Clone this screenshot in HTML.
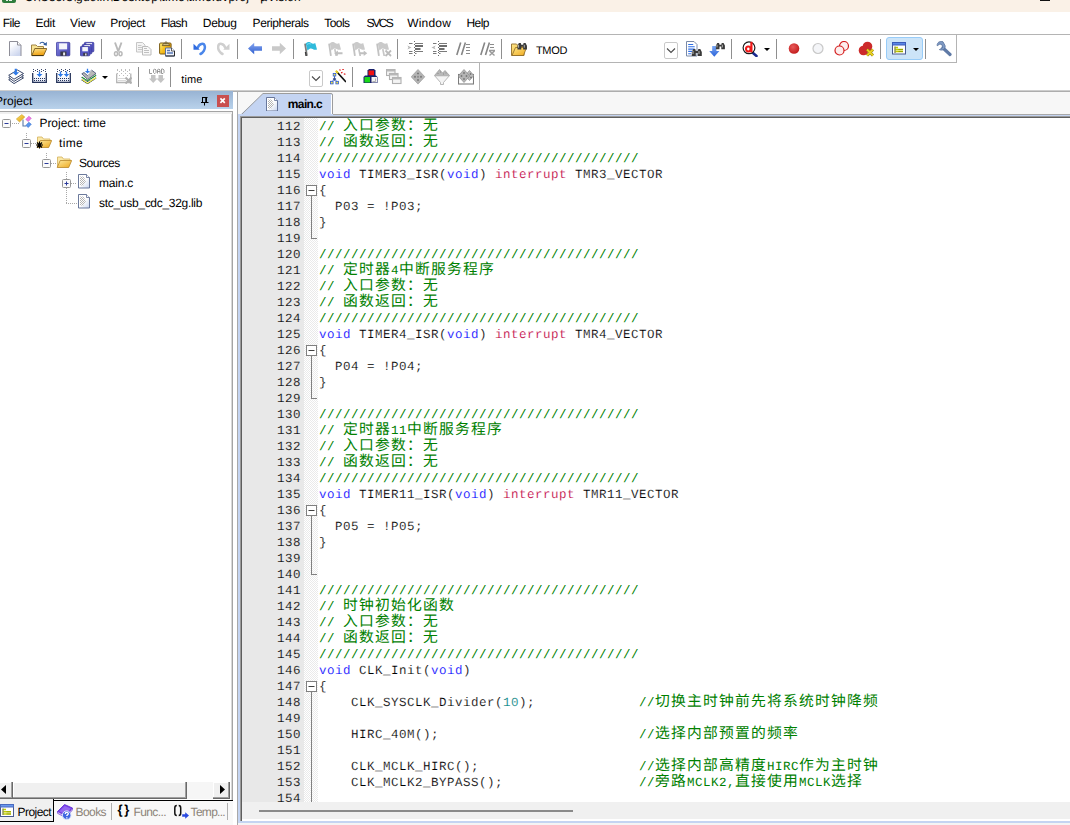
<!DOCTYPE html>
<html><head><meta charset="utf-8"><title>uVision</title>
<style>
html,body{margin:0;padding:0}
body{width:1070px;height:825px;position:relative;overflow:hidden;background:#fff;font-family:"Liberation Sans",sans-serif;font-size:12px;color:#000;text-rendering:geometricPrecision}
.a{position:absolute}
.t{position:absolute;white-space:pre;line-height:14px;height:14px}
.sep{position:absolute;width:1px;background:#8f8f8f}
.hl{position:absolute;height:1px}
.vl{position:absolute;width:1px}
.ln{position:absolute;left:242px;width:828px;height:16px;font-family:"Liberation Mono",monospace;font-size:12.5px;letter-spacing:.5px;line-height:16px;white-space:pre}
.ln i{position:absolute;left:35px;top:1px;font-style:normal;color:#000;-webkit-text-stroke:.15px #e8e8e8}
.ln b{position:absolute;left:77px;top:1px;font-weight:normal;-webkit-text-stroke:.15px #fff}
.c{color:#008000;fill:#008000;-webkit-text-stroke:0}
.k{color:#0000ff}
.m{color:#c0003f}
.n{color:#008080}
span.j{font-family:"Liberation Mono","Noto Sans CJK SC",monospace;font-size:14.8px;letter-spacing:1.2px;line-height:16px;color:#008000}
.g{color:#8c8478}
</style></head><body>
<div class="a" style="left:0;top:0;width:1070px;height:12px;background:#faf1e7"></div>
<div class="a" style="left:2px;top:-8px;width:14px;height:11px;border-radius:2px;background:#2e7d3c"></div>
<div class="a" style="left:6px;top:0;width:2px;height:1px;background:#e8f0e8"></div><div class="a" style="left:9px;top:0;width:3px;height:1px;background:#e8f0e8"></div>
<div class="t" id="title" style="left:24.500px;top:-10px;letter-spacing:.18px">C:\Users\guolin\Desktop\time\time.uvproj - µVision</div>
<div class="a" style="left:1040px;top:0;width:10px;height:1px;background:#111"></div>
<div class="t" style="letter-spacing:-0.56px;left:2.8px;top:16px">File</div>
<div class="t" style="letter-spacing:-0.32px;left:35.5px;top:16px">Edit</div>
<div class="t" style="letter-spacing:-0.12px;left:70px;top:16px">View</div>
<div class="t" style="letter-spacing:-0.39px;left:110.3px;top:16px">Project</div>
<div class="t" style="letter-spacing:-0.61px;left:160.7px;top:16px">Flash</div>
<div class="t" style="letter-spacing:-0.33px;left:202.8px;top:16px">Debug</div>
<div class="t" style="letter-spacing:-0.44px;left:252.6px;top:16px">Peripherals</div>
<div class="t" style="letter-spacing:-0.58px;left:324.3px;top:16px">Tools</div>
<div class="t" style="letter-spacing:-1.80px;left:366.4px;top:16px">SVCS</div>
<div class="t" style="letter-spacing:0.19px;left:407.2px;top:16px">Window</div>
<div class="t" style="letter-spacing:-0.55px;left:466.5px;top:16px">Help</div>
<div class="hl" style="left:0;top:34px;width:1070px;background:#b4b4b4"></div>
<div class="hl" style="left:0;top:62px;width:957px;background:#b4b4b4"></div>
<div class="vl" style="left:956px;top:34px;height:29px;background:#b4b4b4"></div>
<div class="vl" style="left:479px;top:63px;height:27px;background:#b4b4b4"></div>
<div class="hl" style="left:0;top:90px;width:1070px;background:#cdcdcd"></div>
<div class="hl" style="left:0;top:91px;width:1070px;background:#adadad"></div>
<svg class="a" style="left:8px;top:41px" width="16" height="16" viewBox="0 0 16 16"><defs><linearGradient id="gn" x1="0" y1="0" x2=".6" y2="1"><stop offset=".3" stop-color="#fbfcff"/><stop offset="1" stop-color="#cdd6ee"/></linearGradient></defs>
<path d="M1.500 15v-14.500h8l3.500 3.500v11z" fill="url(#gn)"/><path d="M1.500 15v-14.500h8l3.500 3.500v11" fill="none" stroke="#8e8e98"/><path d="M9.500 .5v3.500h3.500" fill="#fff" stroke="#8e8e98"/></svg>
<svg class="a" style="left:31px;top:41px" width="16" height="16" viewBox="0 0 16 16"><defs><linearGradient id="go" x1="0" y1="0" x2=".3" y2="1"><stop offset="0" stop-color="#fde48b"/><stop offset="1" stop-color="#eea012"/></linearGradient></defs>
<path d="M.5 14.500v-10.500h4.500l1.500 1.500h6v2.500" fill="#f9e494" stroke="#a08444"/>
<path d="M.8 14.500l3-7h12l-3.200 7z" fill="url(#go)" stroke="#7a5c20" stroke-width=".9"/><path d="M1 14.600h11.500" stroke="#3a2c08" stroke-width=".9"/>
<path d="M8.800 2.600c1.300-1.800 3.800-1.800 5 .4" fill="none" stroke="#2f5c9e" stroke-width="1.100"/><path d="M12.200 3.800l3.600 1 .1-3.800z" fill="#2f5c9e"/></svg>
<svg class="a" style="left:56px;top:41px" width="16" height="16" viewBox="0 0 16 16"><defs><linearGradient id="gs" x1="0" y1="0" x2="1" y2="1"><stop offset="0" stop-color="#8686e0"/><stop offset="1" stop-color="#4040b0"/></linearGradient></defs><rect x="0.4" y="1.4" width="13.4" height="13.4" rx=".8" fill="url(#gs)" stroke="#3a3a9a" stroke-width=".8"/>
<rect x="3.08" y="2.338" width="8.04" height="6.03" fill="#f4f6fb"/><rect x="4.42" y="10.512" width="6.03" height="4.288" fill="#3a3a46"/><rect x="7.1000000000000005" y="11.450000000000001" width="2.01" height="2.948" fill="#e8e8f0"/></svg>
<svg class="a" style="left:80px;top:41px" width="16" height="16" viewBox="0 0 16 16"><rect x="4.4" y="1.4" width="9.4" height="9.4" rx=".8" fill="#5656c6" stroke="#3a3a9a" stroke-width=".8"/>
<rect x="6.28" y="2.058" width="5.64" height="4.23" fill="#f4f6fb"/><rect x="7.220000000000001" y="7.792" width="4.23" height="3.008" fill="#3a3a46"/><rect x="9.100000000000001" y="8.450000000000001" width="1.41" height="2.068" fill="#e8e8f0"/><rect x="2.4" y="3.4" width="9.4" height="9.4" rx=".8" fill="#5656c6" stroke="#3a3a9a" stroke-width=".8"/>
<rect x="4.28" y="4.058" width="5.64" height="4.23" fill="#f4f6fb"/><rect x="5.22" y="9.792" width="4.23" height="3.008" fill="#3a3a46"/><rect x="7.1" y="10.450000000000001" width="1.41" height="2.068" fill="#e8e8f0"/><rect x="0.4" y="5.4" width="9.4" height="9.4" rx=".8" fill="#5656c6" stroke="#3a3a9a" stroke-width=".8"/>
<rect x="2.2800000000000002" y="6.058000000000001" width="5.64" height="4.23" fill="#f4f6fb"/><rect x="3.2199999999999998" y="11.792000000000002" width="4.23" height="3.008" fill="#3a3a46"/><rect x="5.1000000000000005" y="12.450000000000001" width="1.41" height="2.068" fill="#e8e8f0"/></svg>
<svg class="a" style="left:113px;top:41.5px" width="16" height="16" viewBox="0 0 16 16"><path d="M2 .5l3.300 9M8.500 .5l-3.300 9" stroke="#b9b9b9" stroke-width="1.900" fill="none"/><ellipse cx="3" cy="11.700" rx="1.500" ry="2" fill="none" stroke="#b9b9b9" stroke-width="1.500"/><ellipse cx="7.500" cy="11.700" rx="1.500" ry="2" fill="none" stroke="#b9b9b9" stroke-width="1.500"/></svg>
<svg class="a" style="left:136px;top:41.5px" width="16" height="16" viewBox="0 0 16 16"><path d="M.5 .500h6l2.500 2.500v7h-8.500z" fill="#f4f4f4" stroke="#c6c6c6"/><path d="M2 3.500h3.500M2 5.500h5M2 7.500h5" stroke="#c8c8c8"/><path d="M6.500 4.500h5.500l3 3v5.500h-8.500z" fill="#f8f8f8" stroke="#bcbcbc"/><path d="M8 8.500h5M8 10.500h5M8 6.500h3" stroke="#c0c0c0"/></svg>
<svg class="a" style="left:159px;top:41px" width="16" height="16" viewBox="0 0 16 16"><defs><linearGradient id="gp" x1="0" y1="0" x2="1" y2=".6"><stop offset="0" stop-color="#fff486"/><stop offset=".5" stop-color="#f6c020"/><stop offset="1" stop-color="#de960c"/></linearGradient></defs>
<rect x=".6" y="2" width="11.500" height="11" rx="1" fill="url(#gp)" stroke="#7a5a14"/><path d="M3.300 4.600l1-2h1.300c0-2.200 2.800-2.200 2.800 0h1.300l1 2z" fill="#d8c488" stroke="#5a4a20" stroke-width=".8"/><circle cx="7" cy="2.500" r=".7" fill="#3a2c08"/>
<path d="M6.500 7h6l3 3v5h-9z" fill="#eef2fa" stroke="#5a72a0"/><path d="M12.500 7v3h3" fill="#fff" stroke="#3a3a3a" stroke-width=".8"/><path d="M8 9.500h3M8 12h6" stroke="#5a7ab8" stroke-width="1.300"/><path d="M6.500 15h9v-5" fill="none" stroke="#2a2a2a" stroke-width="1"/></svg>
<svg class="a" style="left:192.5px;top:42px" width="16" height="16" viewBox="0 0 16 16"><g><path d="M4.800 5.800C6 1.200 11 .6 11.800 4.200C12.400 7.500 10 10.800 7.500 12" fill="none" stroke="#4a86ea" stroke-width="2.500" stroke-linecap="round"/><path d="M.5 1.800v6h6.300z" fill="#2f6be0"/></g></svg>
<svg class="a" style="left:216.5px;top:42px" width="16" height="16" viewBox="0 0 16 16"><g transform="translate(13,0) scale(-1,1)"><path d="M4.800 5.800C6 1.200 11 .6 11.800 4.200C12.400 7.500 10 10.800 7.500 12" fill="none" stroke="#cfcfcf" stroke-width="2.500" stroke-linecap="round"/><path d="M.5 1.800v6h6.300z" fill="#cfcfcf"/></g></svg>
<svg class="a" style="left:248px;top:42px" width="16" height="16" viewBox="0 0 16 16"><defs><linearGradient id="gb" x1="0" y1="0" x2="0" y2="1"><stop offset="0" stop-color="#86a6f0"/><stop offset="1" stop-color="#3060d0"/></linearGradient></defs><path d="M0 6.500l6.200-5.700v3.400h7.800v4.600h-7.800v3.400z" fill="url(#gb)"/></svg>
<svg class="a" style="left:272px;top:42px" width="16" height="16" viewBox="0 0 16 16"><path d="M14 6.500l-6.200-5.700v3.400h-7.800v4.600h7.800v3.400z" fill="#c9c9c9"/></svg>
<svg class="a" style="left:304px;top:41.5px" width="16" height="16" viewBox="0 0 16 16"><path d="M.2 1.800l1.800-.3 1.800 12.300-1.800.3z" fill="#7c7c7c"/><path d="M1.800 1.500c1.500-1.800 3.500-2 5-.8s3 1.300 4.400.3l1.800 6.500c-1.600.5-3 .3-4.300-.6s-3.200-.8-5.300 1.600z" fill="#2fbadb"/><path d="M1.500 10l.6 4" stroke="#3a3a3a" stroke-width="1.400"/><path d="M3 2.500c1.500-1.200 2.800-1.200 4-.3" stroke="#7fdcf0" stroke-width=".9" fill="none"/></svg>
<svg class="a" style="left:327.5px;top:41.5px" width="16" height="16" viewBox="0 0 16 16"><path d="M.2 1.800l1.800-.3 1.800 12.300-1.800.3z" fill="#c2c2c2"/><path d="M1.800 1.500c1.500-1.800 3.500-2 5-.8s3 1.300 4.400.3l1.800 6.500c-1.600.5-3 .3-4.300-.6s-3.200-.8-5.300 1.600z" fill="#cacaca"/><path d="M7.500 6.500l1.600 7.500h-1.700l-1.400-6.500z" fill="#c6c6c6"/><path d="M6.300 11.300l3.600-2.800v1.800h4.600v2h-4.600v1.800z" fill="#c0c0c0"/></svg>
<svg class="a" style="left:351.5px;top:41.5px" width="16" height="16" viewBox="0 0 16 16"><path d="M.2 1.800l1.800-.3 1.800 12.300-1.800.3z" fill="#c2c2c2"/><path d="M1.800 1.500c1.500-1.800 3.500-2 5-.8s3 1.300 4.400.3l1.800 6.500c-1.600.5-3 .3-4.300-.6s-3.200-.8-5.300 1.600z" fill="#cacaca"/><path d="M7.500 6.500l1.600 7.500h-1.700l-1.400-6.500z" fill="#c6c6c6"/><path d="M15.300 11.300l-3.600-2.800v1.800h-3.700v2h3.700v1.800z" fill="#c0c0c0"/></svg>
<svg class="a" style="left:375.5px;top:41.5px" width="16" height="16" viewBox="0 0 16 16"><path d="M.2 1.800l1.800-.3 1.800 12.300-1.800.3z" fill="#c2c2c2"/><path d="M1.800 1.500c1.500-1.800 3.500-2 5-.8s3 1.300 4.400.3l1.800 6.500c-1.600.5-3 .3-4.300-.6s-3.200-.8-5.300 1.600z" fill="#cacaca"/><path d="M7.500 6.500l1.600 7.500h-1.700l-1.400-6.500z" fill="#c6c6c6"/><path d="M9.500 8.500l5.500 5.500M15 8.500l-5.500 5.500" stroke="#bcbcbc" stroke-width="1.800"/></svg>
<svg class="a" style="left:407px;top:41px" width="16" height="16" viewBox="0 0 16 16"><path d="M.3 4.500l4.200 2-4.200 2l1.200-2z" fill="#b4b4b4"/><rect x="2" y="2" width="3.500" height="1" fill="#7a7a7a"/><rect x="2" y="10" width="3.500" height="1" fill="#7a7a7a"/><rect x="2" y="12" width="3.500" height="1" fill="#7a7a7a"/><rect x="8" y="2" width="8" height="1" fill="#7a7a7a"/><rect x="8" y="10" width="8" height="1" fill="#7a7a7a"/><rect x="8" y="12" width="1.500" height="1" fill="#7a7a7a"/><rect x="8" y="4" width="8" height="2" fill="#6e6e6e"/><rect x="8" y="7" width="5.500" height="2" fill="#6e6e6e"/><rect x="7" y="0" width="1" height="1" fill="#6a6a6a"/><rect x="7" y="3" width="1" height="1" fill="#6a6a6a"/><rect x="7" y="6" width="1" height="1" fill="#6a6a6a"/><rect x="7" y="9" width="1" height="1" fill="#6a6a6a"/><rect x="7" y="11" width="1" height="1" fill="#6a6a6a"/><rect x="7" y="14" width="1" height="1" fill="#6a6a6a"/></svg>
<svg class="a" style="left:431px;top:41px" width="16" height="16" viewBox="0 0 16 16"><path d="M4.700 4.500l-4.200 2 4.200 2l-1.200-2z" fill="#b4b4b4"/><rect x="2" y="2" width="3.500" height="1" fill="#7a7a7a"/><rect x="2" y="10" width="3.500" height="1" fill="#7a7a7a"/><rect x="2" y="12" width="3.500" height="1" fill="#7a7a7a"/><rect x="8" y="2" width="8" height="1" fill="#7a7a7a"/><rect x="8" y="10" width="8" height="1" fill="#7a7a7a"/><rect x="8" y="12" width="1.500" height="1" fill="#7a7a7a"/><rect x="8" y="4" width="8" height="2" fill="#6e6e6e"/><rect x="8" y="7" width="5.500" height="2" fill="#6e6e6e"/><rect x="7" y="0" width="1" height="1" fill="#6a6a6a"/><rect x="7" y="3" width="1" height="1" fill="#6a6a6a"/><rect x="7" y="6" width="1" height="1" fill="#6a6a6a"/><rect x="7" y="9" width="1" height="1" fill="#6a6a6a"/><rect x="7" y="11" width="1" height="1" fill="#6a6a6a"/><rect x="7" y="14" width="1" height="1" fill="#6a6a6a"/></svg>
<svg class="a" style="left:455px;top:41px" width="16" height="16" viewBox="0 0 16 16"><path d="M5.700 1.500l-3.900 12.500M10.400 1.500l-3.900 12.500" stroke="#868686" stroke-width="1.600"/><rect x="11" y="3" width="4" height="1" fill="#8c8c8c"/><rect x="11" y="6" width="4" height="1" fill="#8c8c8c"/><rect x="11" y="9" width="4" height="1" fill="#8c8c8c"/><rect x="11" y="12" width="4" height="1" fill="#8c8c8c"/></svg>
<svg class="a" style="left:479px;top:41px" width="16" height="16" viewBox="0 0 16 16"><path d="M5.700 1.500l-3.900 12.500M10.400 1.500l-3.900 12.500" stroke="#868686" stroke-width="1.600"/><rect x="11" y="3" width="4" height="1" fill="#8c8c8c"/><rect x="11" y="6" width="4" height="1" fill="#8c8c8c"/><path d="M10 9.500h6M10.500 10l5 4.500M15.500 10l-5 4.500" stroke="#9a9a9a" stroke-width="1.400"/></svg>
<svg class="a" style="left:511px;top:41.5px" width="16" height="16" viewBox="0 0 16 16"><defs><linearGradient id="gf" x1="0" y1="0" x2="1" y2="1"><stop offset="0" stop-color="#fde88b"/><stop offset="1" stop-color="#f0a81c"/></linearGradient></defs>
<path d="M.5 13.500v-11.500h5l1.500 1.500h6v10z" fill="url(#gf)" stroke="#9c7a3a"/><path d="M1 13.500l3.500-8h11l-3 8z" fill="url(#gf)" stroke="#8a6a28" stroke-width=".8"/><g transform="translate(5.5,0) scale(0.95)"><path d="M1 8v-4l1.500-3h2l.5 2h2l.5-2h2l1.500 3v4h-4v-3h-2v3z" fill="#3a3a3a"/><path d="M2.200 3v3M8.200 3v3" stroke="#c8c8c8" stroke-width=".9"/></g></svg>
<svg class="a" style="left:686px;top:41px" width="16" height="16" viewBox="0 0 16 16"><path d="M.5 .500h7.500l3 3v11.500h-10.500z" fill="#fff" stroke="#7a8aa8"/><path d="M2.200 3.500h5M2.200 5.800h6.500M2.200 8.100h6.500M2.200 10.400h4M2.200 12.700h3" stroke="#2f6fe6" stroke-width="1.100"/><g transform="translate(4.8,7) scale(1)"><path d="M1 8v-4l1.500-3h2l.5 2h2l.5-2h2l1.500 3v4h-4v-3h-2v3z" fill="#3a3a3a"/><path d="M2.200 3v3M8.200 3v3" stroke="#c8c8c8" stroke-width=".9"/></g></svg>
<svg class="a" style="left:709px;top:41.5px" width="16" height="16" viewBox="0 0 16 16"><defs><linearGradient id="ga" x1="0" y1="0" x2="0" y2="1"><stop offset="0" stop-color="#7aa8f4"/><stop offset="1" stop-color="#2a62d8"/></linearGradient></defs><path d="M3.200 4h4.200v5h3l-5.100 5.800-5.100-5.800h3z" fill="url(#ga)"/><g transform="translate(6,0) scale(0.9)"><path d="M1 8v-4l1.500-3h2l.5 2h2l.5-2h2l1.500 3v4h-4v-3h-2v3z" fill="#3a3a3a"/><path d="M2.200 3v3M8.200 3v3" stroke="#c8c8c8" stroke-width=".9"/></g></svg>
<svg class="a" style="left:742px;top:40.5px" width="16" height="16" viewBox="0 0 16 16"><path d="M11 12l3.500 3" stroke="#1a2a90" stroke-width="2.600" stroke-linecap="round"/><circle cx="7" cy="6.800" r="5.900" fill="#fff" stroke="#1a1a1a" stroke-width="1.200"/>
<path d="M8.300 .8h2.200v10.500h-2.200z" fill="#f01818"/><ellipse cx="6.300" cy="8" rx="2.300" ry="2.500" fill="none" stroke="#f01818" stroke-width="2.100"/></svg>
<svg class="a" style="left:788px;top:42px" width="16" height="16" viewBox="0 0 16 16"><defs><radialGradient id="gr" cx=".4" cy=".35" r=".7"><stop offset="0" stop-color="#e85a5a"/><stop offset="1" stop-color="#c01818"/></radialGradient></defs><circle cx="6" cy="6.500" r="5.300" fill="url(#gr)"/></svg>
<svg class="a" style="left:812px;top:42px" width="16" height="16" viewBox="0 0 16 16"><circle cx="6" cy="6.500" r="5" fill="#f4f5f8" stroke="#c8c8c8" stroke-width="1.200"/></svg>
<svg class="a" style="left:834px;top:41px" width="16" height="16" viewBox="0 0 16 16"><circle cx="10" cy="5" r="4.500" fill="#fdeeee" stroke="#d42020" stroke-width="1.200"/><circle cx="5.500" cy="9.500" r="4.500" fill="#fdeeee" stroke="#d42020" stroke-width="1.200"/></svg>
<svg class="a" style="left:858px;top:41px" width="16" height="16" viewBox="0 0 16 16"><circle cx="9.500" cy="5.500" r="4.800" fill="#cc2a2a"/><circle cx="5.500" cy="9.500" r="4.800" fill="#cc2a2a"/><path d="M9 8.500l6 6M15 8.500l-6 6" stroke="#8a7a10" stroke-width="3"/><path d="M9 8.500l6 6M15 8.500l-6 6" stroke="#e8d020" stroke-width="1.800"/></svg>
<svg class="a" style="left:936px;top:41px" width="16" height="16" viewBox="0 0 16 16"><path d="M7 7l7 6.500" stroke="#5f7aa6" stroke-width="3.200" stroke-linecap="round"/><path d="M7 .8c-3-1.300-6.300.8-5.800 4l2.800-1.900 2.300 1.300v2.700l-2.900 1.700c3 1.500 6.300-.6 5.700-3.900z" fill="#7f9ac4" stroke="#56709c" stroke-width=".8"/></svg>
<div class="sep" style="left:101px;top:39px;height:20px"></div>
<div class="sep" style="left:181px;top:39px;height:20px"></div>
<div class="sep" style="left:237px;top:39px;height:20px"></div>
<div class="sep" style="left:293px;top:39px;height:20px"></div>
<div class="sep" style="left:397px;top:39px;height:20px"></div>
<div class="sep" style="left:501px;top:39px;height:20px"></div>
<div class="sep" style="left:731px;top:39px;height:20px"></div>
<div class="sep" style="left:776px;top:39px;height:20px"></div>
<div class="sep" style="left:880px;top:39px;height:20px"></div>
<div class="sep" style="left:925px;top:39px;height:20px"></div>
<div class="t" style="letter-spacing:-0.35px;font-size:11px;left:536px;top:43.500px">TMOD</div>
<svg class="a" style="left:664px;top:42px" width="14" height="17" viewBox="0 0 14 17"><rect x=".5" y=".5" width="13" height="16" rx="1.500" fill="#fff" stroke="#c9c9c9"/><path d="M3 6.500l4 4 4-4" fill="none" stroke="#4a4a4a" stroke-width="1.100"/></svg>
<svg class="a" style="left:763.500px;top:48px" width="6" height="3"><path d="M0 0h6l-3 3z" fill="#000"/></svg>
<div class="a" style="left:886px;top:37px;width:35px;height:21px;border:1px solid #98ccf8;border-radius:3px;background:#cce4f8"></div>
<svg class="a" style="left:892px;top:42px" width="16" height="16" viewBox="0 0 16 16"><rect x=".5" y=".500" width="13" height="11.500" fill="#fff" stroke="#4a5a90"/><rect x=".5" y=".5" width="13" height="2.500" fill="#5a88e8" stroke="#3a5ab8"/><path d="M3.500 5.500h2.500M3.500 7.500h7.500M3.500 9.500h7.500" stroke="#c4d000" stroke-width="1.300"/><path d="M3 4.500v6.500" stroke="#5a6400" stroke-width="1"/><path d="M6.500 7.500h4.500M6.500 9.500h4.500" stroke="#7a8400" stroke-width=".6"/></svg>
<svg class="a" style="left:912.500px;top:48px" width="6" height="3"><path d="M0 0h6l-3 3z" fill="#000"/></svg>
<svg class="a" style="left:7.5px;top:68px" width="16" height="16" viewBox="0 0 16 16"><path d="M.7 11.7l8.800-5.300 6 3.500-9.500 5.700z" fill="#fff" stroke="#26345a" stroke-width=".9" stroke-linejoin="round"/><path d="M.7 9.5l8.800-5.300 6 3.500-9.500 5.700z" fill="#fff" stroke="#26345a" stroke-width=".9" stroke-linejoin="round"/><path d="M.7 7.3l8.800-5.300 6 3.500-9.500 5.700z" fill="#fff" stroke="#26345a" stroke-width=".9" stroke-linejoin="round"/><path d="M6.699999999999999 0.8h2.2v3.5h2.3l-3.4 3.2l-3.4 -3.2h2.3z" fill="#2f7ae8"/></svg>
<svg class="a" style="left:32px;top:68px" width="16" height="16" viewBox="0 0 16 16"><defs><linearGradient id="gu1" x1="0" y1="0" x2="0" y2="1"><stop offset=".3" stop-color="#fff"/><stop offset="1" stop-color="#dfe4f4"/></linearGradient></defs><path d="M.7 5v9.300h13.600v-9.300" fill="url(#gu1)" stroke="#26345a" stroke-width="1.300"/><rect x="1" y="1" width="1" height="1" fill="#3a4668"/><rect x="5" y="1" width="1" height="1" fill="#3a4668"/><rect x="9" y="1" width="1" height="1" fill="#3a4668"/><rect x="13" y="1" width="1" height="1" fill="#3a4668"/><rect x="3" y="2" width="1" height="1" fill="#3a4668"/><rect x="7" y="2" width="1" height="1" fill="#3a4668"/><rect x="11" y="2" width="1" height="1" fill="#3a4668"/><rect x="1" y="3" width="1" height="1" fill="#3a4668"/><rect x="5" y="3" width="1" height="1" fill="#3a4668"/><rect x="9" y="3" width="1" height="1" fill="#3a4668"/><rect x="13" y="3" width="1" height="1" fill="#3a4668"/><rect x="2" y="10" width="1" height="1" fill="#26345a"/><rect x="4" y="10" width="1" height="1" fill="#26345a"/><rect x="6" y="10" width="1" height="1" fill="#26345a"/><rect x="8" y="10" width="1" height="1" fill="#26345a"/><rect x="10" y="10" width="1" height="1" fill="#26345a"/><rect x="12" y="10" width="1" height="1" fill="#26345a"/><rect x="2" y="12" width="1" height="1" fill="#26345a"/><rect x="4" y="12" width="1" height="1" fill="#26345a"/><rect x="6" y="12" width="1" height="1" fill="#26345a"/><rect x="8" y="12" width="1" height="1" fill="#26345a"/><rect x="10" y="12" width="1" height="1" fill="#26345a"/><rect x="12" y="12" width="1" height="1" fill="#26345a"/><path d="M6.8 3.5h1.4v2.5h2.3l-3 3l-3 -3h2.3z" fill="#2f7ae8"/></svg>
<svg class="a" style="left:56px;top:68px" width="16" height="16" viewBox="0 0 16 16"><defs><linearGradient id="gu2" x1="0" y1="0" x2="0" y2="1"><stop offset=".3" stop-color="#fff"/><stop offset="1" stop-color="#dfe4f4"/></linearGradient></defs><path d="M.7 5v9.300h13.600v-9.300" fill="url(#gu2)" stroke="#26345a" stroke-width="1.300"/><rect x="1" y="1" width="1" height="1" fill="#3a4668"/><rect x="5" y="1" width="1" height="1" fill="#3a4668"/><rect x="9" y="1" width="1" height="1" fill="#3a4668"/><rect x="13" y="1" width="1" height="1" fill="#3a4668"/><rect x="3" y="2" width="1" height="1" fill="#3a4668"/><rect x="7" y="2" width="1" height="1" fill="#3a4668"/><rect x="11" y="2" width="1" height="1" fill="#3a4668"/><rect x="1" y="3" width="1" height="1" fill="#3a4668"/><rect x="5" y="3" width="1" height="1" fill="#3a4668"/><rect x="9" y="3" width="1" height="1" fill="#3a4668"/><rect x="13" y="3" width="1" height="1" fill="#3a4668"/><rect x="2" y="10" width="1" height="1" fill="#26345a"/><rect x="4" y="10" width="1" height="1" fill="#26345a"/><rect x="6" y="10" width="1" height="1" fill="#26345a"/><rect x="8" y="10" width="1" height="1" fill="#26345a"/><rect x="10" y="10" width="1" height="1" fill="#26345a"/><rect x="12" y="10" width="1" height="1" fill="#26345a"/><rect x="2" y="12" width="1" height="1" fill="#26345a"/><rect x="4" y="12" width="1" height="1" fill="#26345a"/><rect x="6" y="12" width="1" height="1" fill="#26345a"/><rect x="8" y="12" width="1" height="1" fill="#26345a"/><rect x="10" y="12" width="1" height="1" fill="#26345a"/><rect x="12" y="12" width="1" height="1" fill="#26345a"/><path d="M3.8 3.5h1.4v2.5h2.0999999999999996l-2.8 3l-2.8 -3h2.0999999999999996z" fill="#2f7ae8"/><path d="M9.8 3.5h1.4v2.5h2.0999999999999996l-2.8 3l-2.8 -3h2.0999999999999996z" fill="#2f7ae8"/></svg>
<svg class="a" style="left:80.5px;top:68px" width="16" height="16" viewBox="0 0 16 16"><path d="M1 11.2L6.500 15.0L14.800 9.399999999999999" fill="none" stroke="#1e2c5c" stroke-width="2.3" stroke-dasharray="1.500 .5"/><path d="M1 11.2L6.500 15.0L14.800 9.399999999999999" fill="none" stroke="#ecec10" stroke-width="1.3"/><path d="M1 9.9L6.500 13.7L14.800 8.1" fill="none" stroke="#fff" stroke-width="1.9" stroke-dasharray="1.500 .5"/><path d="M1 9.9L6.500 13.7L14.800 8.1" fill="none" stroke="#fff" stroke-width="0.9"/><path d="M1 8.7L6.500 12.5L14.800 6.8999999999999995" fill="none" stroke="#1e2c5c" stroke-width="2.3" stroke-dasharray="1.500 .5"/><path d="M1 8.7L6.500 12.5L14.800 6.8999999999999995" fill="none" stroke="#22a822" stroke-width="1.3"/><path d="M1 7.4L6.500 11.2L14.800 5.6000000000000005" fill="none" stroke="#fff" stroke-width="1.9" stroke-dasharray="1.500 .5"/><path d="M1 7.4L6.500 11.2L14.800 5.6000000000000005" fill="none" stroke="#fff" stroke-width="0.9"/><path d="M.8 5.800l2.200-1.300 4 3.500 3.500-6 4.500 3.500-8.300 6z" fill="#b8b8b8" stroke="#2a3862" stroke-width=".7" stroke-linejoin="round"/><path d="M7 8l3.500-6" stroke="#e8e8e8" stroke-width=".8"/><path d="M5.85 0.8h1.3v2.2h1.9500000000000002l-2.6 2.6l-2.6 -2.6h1.9500000000000002z" fill="#2f7ae8"/></svg>
<svg class="a" style="left:116px;top:68px" width="16" height="16" viewBox="0 0 16 16"><rect x="1" y="1" width="1" height="1" fill="#bdbdbd"/><rect x="5" y="1" width="1" height="1" fill="#bdbdbd"/><rect x="9" y="1" width="1" height="1" fill="#bdbdbd"/><rect x="13" y="1" width="1" height="1" fill="#bdbdbd"/><rect x="3" y="3" width="1" height="1" fill="#bdbdbd"/><rect x="7" y="3" width="1" height="1" fill="#bdbdbd"/><rect x="11" y="3" width="1" height="1" fill="#bdbdbd"/><rect x="1" y="2" width="1" height="1" fill="#bdbdbd"/><rect x="5" y="2" width="1" height="1" fill="#bdbdbd"/><rect x="9" y="2" width="1" height="1" fill="#bdbdbd"/><rect x="13" y="2" width="1" height="1" fill="#bdbdbd"/><rect x="1" y="5" width="1" height="1" fill="#bdbdbd"/><rect x="5" y="5" width="1" height="1" fill="#bdbdbd"/><rect x="9" y="5" width="1" height="1" fill="#bdbdbd"/><rect x="13" y="5" width="1" height="1" fill="#bdbdbd"/><rect x="3" y="7" width="1" height="1" fill="#bdbdbd"/><rect x="7" y="7" width="1" height="1" fill="#bdbdbd"/><rect x="11" y="7" width="1" height="1" fill="#bdbdbd"/><path d="M.7 5.500v9h14.100v-9" fill="none" stroke="#b4b4b4" stroke-width="1.300"/><rect x="2.5" y="10" width="1" height="1" fill="#b4b4b4"/><rect x="4.5" y="10" width="1" height="1" fill="#b4b4b4"/><rect x="6.5" y="10" width="1" height="1" fill="#b4b4b4"/><rect x="8.5" y="10" width="1" height="1" fill="#b4b4b4"/><rect x="2.5" y="12" width="1" height="1" fill="#b4b4b4"/><rect x="4.5" y="12" width="1" height="1" fill="#b4b4b4"/><rect x="6.5" y="12" width="1" height="1" fill="#b4b4b4"/><rect x="8.5" y="12" width="1" height="1" fill="#b4b4b4"/><path d="M9.500 9.500l6 6M15.500 9.500l-6 6" stroke="#b0b0b0" stroke-width="2"/></svg>
<svg class="a" style="left:149px;top:68px" width="16" height="16" viewBox="0 0 16 16"><path d="M.5 1v4.500h2.500M4.500 2v2.500l1 1h.5l1-1v-2.500l-1-1h-.5zM8.500 5.500v-3.500l1-1h.5l1 1v3.500M8.500 3.500h2.500M12.500 1v4.500h1.500l1-1v-2.500l-1-1z" fill="none" stroke="#8e8e8e" stroke-width=".9"/><path d="M2 7h4.500v3.500h3v-3.500h4.500v3.500h2l-4.200 4.500-3.800-4-3.800 4-4.200-4.500h2z" fill="#c4c4c4"/></svg>
<svg class="a" style="left:330px;top:68.5px" width="16" height="16" viewBox="0 0 16 16"><path d="M6.500 2.500l9.500 10.500" stroke="#111" stroke-width="1.700"/><path d="M5.800 1.700l2.200 2.400" stroke="#e8d020" stroke-width="2"/><path d="M9.200 .8l1.600.5M12.300 .5l1.500-.2M11 3.800l1.500-.4M13.800 4.800l1.600.6" stroke="#e02020" stroke-width="1.200"/>
<path d="M4.500 6v3.500M4.500 10l-2.800 3M4.500 10l2.800 3" stroke="#2a5ad8" stroke-width=".9"/><rect x="3.200" y="4.400" width="2.600" height="2.600" fill="#f0e040" stroke="#2a5ad8" stroke-width=".8"/><rect x=".5" y="12.300" width="2.600" height="2.600" fill="#f0e040" stroke="#2a5ad8" stroke-width=".8"/><rect x="5.900" y="12.300" width="2.600" height="2.600" fill="#f0e040" stroke="#2a5ad8" stroke-width=".8"/><path d="M4.500 8.300l1.800 1.800-1.800 1.800-1.800-1.800z" fill="#3a5088"/></svg>
<svg class="a" style="left:363px;top:68.3px" width="16" height="16" viewBox="0 0 16 16"><path d="M4.500 2.500l1.500-1.500h5l1.500 1.500v5.500h-8z" fill="#18206a"/><rect x="5.500" y="2.500" width="5.500" height="5" fill="#f01010"/>
<path d="M.5 9l1.500-1.500h11l1.500 1.500v6h-14z" fill="#18206a"/><rect x="1.500" y="9" width="5.500" height="5.500" fill="#18d818"/><rect x="8.500" y="9" width="5.500" height="5.500" fill="#f2f2f2"/><path d="M12.500 10.500v3h-3" stroke="#b0b0b0" fill="none"/></svg>
<svg class="a" style="left:386px;top:69px" width="16" height="16" viewBox="0 0 16 16"><rect x="0.5" y="0.5" width="8.500" height="6" fill="#f4f4f4" stroke="#b0b0b0" stroke-width="1.100"/><rect x="0.5" y="0.5" width="8.500" height="2" fill="#b8b8b8"/><rect x="3.5" y="4.5" width="8.500" height="6" fill="#f4f4f4" stroke="#b0b0b0" stroke-width="1.100"/><rect x="3.5" y="4.5" width="8.500" height="2" fill="#b8b8b8"/><rect x="6.5" y="8.5" width="8.500" height="6" fill="#f4f4f4" stroke="#b0b0b0" stroke-width="1.100"/><rect x="6.5" y="8.5" width="8.500" height="2" fill="#b8b8b8"/></svg>
<svg class="a" style="left:410.5px;top:69px" width="16" height="16" viewBox="0 0 16 16"><path d="M7 .5l6.800 7.300-6.800 7.300-6.800-7.300z" fill="#b4b4b4" stroke="#9c9c9c" stroke-width=".7"/><path d="M7 3.500v2M6 4.500h2" stroke="#787878" stroke-width="1"/><path d="M4 6.800v2M3 7.800h2" stroke="#787878" stroke-width="1"/><path d="M10 6.800v2M9 7.800h2" stroke="#787878" stroke-width="1"/><path d="M7 10v2M6 11h2" stroke="#787878" stroke-width="1"/><path d="M7 6.800v2M6 7.800h2" stroke="#8a8a8a" stroke-width="1"/></svg>
<svg class="a" style="left:434px;top:69px" width="16" height="16" viewBox="0 0 16 16"><path d="M.5 6.500l5-6 3 3.500 2.500-2.500 4.500 5z" fill="#b8b8b8" stroke="#9a9a9a" stroke-width=".7"/><path d="M.7 6.800h14.600l-5.800 6.700v2h-3v-2z" fill="#f4f4f4" stroke="#b0b0b0" stroke-width=".9"/><path d="M3.500 4.500h1M6 3h1M9 5h1M11.500 4h1" stroke="#8a8a8a"/></svg>
<svg class="a" style="left:458px;top:69px" width="16" height="16" viewBox="0 0 16 16"><rect x=".5" y="5.500" width="15" height="9.500" fill="#fff" stroke="#7c7c7c" stroke-width="1.100"/><path d="M11.500 1.500l4.300 5-4.300 5-4.300-5z" fill="#bcbcbc" stroke="#8c8c8c" stroke-width=".7"/><path d="M6 .5l5.800 6.500-5.800 6.500-5.800-6.500z" fill="#b4b4b4" stroke="#8c8c8c" stroke-width=".7"/><path d="M6 3v2M5 4h2" stroke="#7c7c7c" stroke-width="1"/><path d="M3.500 6v2M2.500 7h2" stroke="#7c7c7c" stroke-width="1"/><path d="M8.500 6v2M7.500 7h2" stroke="#7c7c7c" stroke-width="1"/><path d="M6 9v2M5 10h2" stroke="#7c7c7c" stroke-width="1"/><path d="M12.500 4v2M11.500 5h2" stroke="#7c7c7c" stroke-width="1"/><path d="M13 7.500v2M12 8.500h2" stroke="#7c7c7c" stroke-width="1"/></svg>
<svg class="a" style="left:102px;top:76px" width="6" height="3"><path d="M0 0h6l-3 3z" fill="#000"/></svg>
<div class="sep" style="left:138px;top:67px;height:20px"></div>
<div class="sep" style="left:170px;top:67px;height:20px"></div>
<div class="sep" style="left:352px;top:67px;height:20px"></div>
<div class="t" style="letter-spacing:0.15px;font-size:11px;left:181.200px;top:72.500px">time</div>
<svg class="a" style="left:309px;top:70px" width="14" height="17" viewBox="0 0 14 17"><rect x=".5" y=".5" width="13" height="16" rx="1.500" fill="#fff" stroke="#c9c9c9"/><path d="M3 6.500l4 4 4-4" fill="none" stroke="#4a4a4a" stroke-width="1.100"/></svg>
<div class="a" style="left:0;top:91px;width:233px;height:18px;background:linear-gradient(#98b3d3,#b9d2eb)"></div>
<div class="t" id="ph" style="left:-5px;top:94px">Project</div>
<svg class="a" style="left:201px;top:97px" width="8" height="9" viewBox="0 0 8 9"><path d="M1 .500h5.500M1.500 0v5.500M5 0v5.500M0 5.500h7.500M3.500 6v2.500" stroke="#000" stroke-width="1" fill="none"/><path d="M4.500 0h1.500v5h-1.500z" fill="#000"/></svg>
<div class="a" style="left:217px;top:95px;width:12px;height:12px;background:#c94f4f"></div>
<svg class="a" style="left:219px;top:97px" width="8" height="8" viewBox="0 0 8 8"><path d="M1.400 1.400l4.400 4.400M5.800 1.400l-4.400 4.400" stroke="#fff" stroke-width="1.700"/></svg>
<div class="a" style="left:-1px;top:111px;width:232px;height:688px;border:1px solid #a4a4a4;background:#fff;box-shadow:inset 0 2px 0 #f0f0f0, inset -1px 0 0 #d8d8d8"></div>
<div class="vl" style="left:237px;top:92px;height:733px;background:#a9a9a9"></div>
<svg class="a" style="left:2px;top:119px" width="9" height="9" viewBox="0 0 9 9"><rect x=".5" y=".5" width="8" height="8" rx="1" fill="#fafafa" stroke="#969696"/><path d="M2.500 4.500h4" stroke="#2a3a9a"/></svg>
<div class="a" style="left:12px;top:123px;width:7px;height:1px;background:repeating-linear-gradient(90deg,#a8a8a8 0 1px,transparent 1px 2px)"></div>
<svg class="a" style="left:16px;top:113.5px" width="16" height="16" viewBox="0 0 16 16"><defs><linearGradient id="gpy" x1="0" y1="0" x2="1" y2="1"><stop offset="0" stop-color="#fbe068"/><stop offset="1" stop-color="#e0a010"/></linearGradient></defs><path d="M7 5.500v6.500h3" fill="none" stroke="#5a78a8" stroke-width="1.100"/><path d="M.3 5l5.500-4.500 3 2.500-5.300 5z" fill="url(#gpy)" stroke="#c8981c" stroke-width=".5"/><path d="M12.800 2.200l2.500 2-3 3.300-2.500-2z" fill="#ee7ae8" stroke="#c44cc0" stroke-width=".5"/><path d="M12.800 8.200l2.500 2-3 3.300-2.500-2z" fill="#5a98ee" stroke="#2a62c8" stroke-width=".5"/></svg>
<div class="t" style="letter-spacing:-0.01px;left:39.400px;top:116px">Project: time</div>
<div class="a" style="left:26px;top:133px;width:1px;height:6px;background:repeating-linear-gradient(180deg,#a8a8a8 0 1px,transparent 1px 2px)"></div>
<svg class="a" style="left:22px;top:139px" width="9" height="9" viewBox="0 0 9 9"><rect x=".5" y=".5" width="8" height="8" rx="1" fill="#fafafa" stroke="#969696"/><path d="M2.500 4.500h4" stroke="#2a3a9a"/></svg>
<div class="a" style="left:31px;top:143px;width:5px;height:1px;background:repeating-linear-gradient(90deg,#a8a8a8 0 1px,transparent 1px 2px)"></div>
<svg class="a" style="left:36px;top:135px" width="16" height="16" viewBox="0 0 16 16"><defs><linearGradient id="gfx" x1="0" y1="0" x2="1" y2="1"><stop offset="0" stop-color="#fdeaa0"/><stop offset="1" stop-color="#eea81c"/></linearGradient></defs><path d="M1.500 12v-10h4.500l1.500 2h6.500v3" fill="#fbe9a8" stroke="#d8b868" stroke-width=".9"/><path d="M1.200 12.500l3-7h11.500l-3 7z" fill="url(#gfx)" stroke="#b8862a" stroke-width=".8"/><path d="M0 10h7M3.500 6.500v7M1 7.500l5 5M6 7.500l-5 5" stroke="#000" stroke-width="1.100"/></svg>
<div class="t" style="letter-spacing:0.33px;left:59px;top:136px">time</div>
<div class="a" style="left:46px;top:153px;width:1px;height:6px;background:repeating-linear-gradient(180deg,#a8a8a8 0 1px,transparent 1px 2px)"></div>
<svg class="a" style="left:42px;top:159px" width="9" height="9" viewBox="0 0 9 9"><rect x=".5" y=".5" width="8" height="8" rx="1" fill="#fafafa" stroke="#969696"/><path d="M2.500 4.500h4" stroke="#2a3a9a"/></svg>
<div class="a" style="left:51px;top:163px;width:6px;height:1px;background:repeating-linear-gradient(90deg,#a8a8a8 0 1px,transparent 1px 2px)"></div>
<svg class="a" style="left:56px;top:155px" width="16" height="16" viewBox="0 0 16 16"><defs><linearGradient id="gfo" x1="0" y1="0" x2="1" y2="1"><stop offset="0" stop-color="#fdeaa0"/><stop offset="1" stop-color="#eea81c"/></linearGradient></defs><path d="M1.500 12v-10h4.500l1.500 2h6.500v3" fill="#fbe9a8" stroke="#d8b868" stroke-width=".9"/><path d="M1.200 12.500l3-7h11.500l-3 7z" fill="url(#gfo)" stroke="#b8862a" stroke-width=".8"/></svg>
<div class="t" style="letter-spacing:-0.48px;left:79px;top:156px">Sources</div>
<div class="a" style="left:66px;top:172px;width:1px;height:32px;background:repeating-linear-gradient(180deg,#a8a8a8 0 1px,transparent 1px 2px)"></div>
<svg class="a" style="left:62px;top:179px" width="9" height="9" viewBox="0 0 9 9"><rect x=".5" y=".5" width="8" height="8" rx="1" fill="#fafafa" stroke="#969696"/><path d="M2.500 4.500h4" stroke="#2a3a9a"/><path d="M4.500 2.500v4" stroke="#2a3a9a"/></svg>
<div class="a" style="left:71px;top:183px;width:6px;height:1px;background:repeating-linear-gradient(90deg,#a8a8a8 0 1px,transparent 1px 2px)"></div>
<svg class="a" style="left:78px;top:174px" width="16" height="16" viewBox="0 0 16 16"><defs><linearGradient id="gfi" x1="0" y1="0" x2="1" y2="1"><stop offset=".5" stop-color="#fff"/><stop offset="1" stop-color="#c8d4ee"/></linearGradient><pattern id="pd" width="2" height="2" patternUnits="userSpaceOnUse"><rect width="1" height="1" fill="#b4b4b4"/><rect x="1" y="1" width="1" height="1" fill="#b4b4b4"/></pattern></defs>
<path d="M.5 .500h8l3 3v10.500h-11z" fill="url(#gfi)" stroke="#5a6a90" stroke-width=".9"/><path d="M8.500 .500v3h3" fill="#fff" stroke="#5a6a90" stroke-width=".8"/><path d="M2 2.500h3.500l2.500 4.500-2.500 4.500h-3.500z" fill="url(#pd)"/></svg>
<div class="t" style="letter-spacing:-0.22px;left:99px;top:176px">main.c</div>
<div class="a" style="left:66px;top:203px;width:11px;height:1px;background:repeating-linear-gradient(90deg,#a8a8a8 0 1px,transparent 1px 2px)"></div>
<svg class="a" style="left:78px;top:194px" width="16" height="16" viewBox="0 0 16 16"><defs><linearGradient id="gfi" x1="0" y1="0" x2="1" y2="1"><stop offset=".5" stop-color="#fff"/><stop offset="1" stop-color="#c8d4ee"/></linearGradient><pattern id="pd" width="2" height="2" patternUnits="userSpaceOnUse"><rect width="1" height="1" fill="#b4b4b4"/><rect x="1" y="1" width="1" height="1" fill="#b4b4b4"/></pattern></defs>
<path d="M.5 .500h8l3 3v10.500h-11z" fill="url(#gfi)" stroke="#5a6a90" stroke-width=".9"/><path d="M8.500 .500v3h3" fill="#fff" stroke="#5a6a90" stroke-width=".8"/><path d="M2 2.500h3.500l2.500 4.500-2.500 4.500h-3.500z" fill="url(#pd)"/></svg>
<div class="t" style="letter-spacing:-0.30px;left:99px;top:196px">stc_usb_cdc_32g.lib</div>
<div class="a" style="left:0;top:782px;width:230px;height:17px;background:#f6f6f6"></div>
<div class="a" style="left:-2px;top:782px;width:14px;height:16px;background:#f0f0f0;border-right:1px solid #6a6a6a;border-bottom:1px solid #6a6a6a;box-shadow:inset -1px -1px 0 #a0a0a0, inset 1px 1px 0 #fff"></div>
<svg class="a" style="left:1px;top:785px" width="5" height="9"><path d="M5 0v9l-5-4.500z" fill="#000"/></svg>
<div class="a" style="left:13px;top:782px;width:173px;height:16px;background:#f0f0f0;border-right:1px solid #6a6a6a;border-bottom:1px solid #6a6a6a;box-shadow:inset -1px -1px 0 #a0a0a0, inset 1px 1px 0 #fff"></div>
<div class="a" style="left:213px;top:782px;width:16px;height:16px;background:#f0f0f0;border-right:1px solid #6a6a6a;border-bottom:1px solid #6a6a6a;box-shadow:inset -1px -1px 0 #a0a0a0, inset 1px 1px 0 #fff"></div>
<svg class="a" style="left:220px;top:785px" width="5" height="9"><path d="M0 0v9l5-4.500z" fill="#000"/></svg>
<div class="a" style="left:0;top:801px;width:233px;height:24px;background:#f8f8f8"></div>
<div class="hl" style="left:0;top:800px;width:233px;background:#000"></div>
<div class="a" style="left:0;top:799px;width:53px;height:22px;background:#f0f0f0;border-right:1px solid #000;border-bottom:1.500px solid #000"></div>
<svg class="a" style="left:-0.5px;top:804px" width="14" height="13" viewBox="0 0 14 13"><rect x=".5" y=".500" width="13" height="12" fill="#fff" stroke="#4a5a90"/><rect x=".5" y=".5" width="13" height="2.500" fill="#6a98ee" stroke="#4a6ac0"/><path d="M3.500 5.500h2.500M3.500 7.800h7.500M3.500 10h7.500" stroke="#c4d000" stroke-width="1.400"/><path d="M3 4.500v6.500" stroke="#5a6400" stroke-width="1"/><path d="M6.500 7.800h4.500M6.500 10h4.500" stroke="#7a8400" stroke-width=".6"/></svg>
<div class="t" style="letter-spacing:-0.55px;left:17.500px;top:805px">Project</div>
<svg class="a" style="left:57px;top:803.5px" width="16" height="16" viewBox="0 0 16 16"><path d="M.5 7.500l7-7 8 3.500-6.500 8z" fill="#7a3eea" stroke="#5a2ad0" stroke-width=".8"/><path d="M2.500 7.300l5.300-5.300 6 2.600-5 6z" fill="#9468f0"/><path d="M.5 7.500v1.800l8.500 4.500 6.500-8v-1.800l-6.500 8z" fill="#d8c8f8" stroke="#6a3ad0" stroke-width=".7"/><circle cx="9.700" cy="11.200" r="4.300" fill="#3f66e0" stroke="#dfe6ff" stroke-width="1"/><path d="M8.200 10c0-2.100 3.200-2.100 3.100-.2c0 1.100-1.500 1-1.500 2.300M9.800 13.300v1.100" stroke="#fff" stroke-width="1.300" fill="none"/></svg>
<div class="t g" style="letter-spacing:-0.59px;left:75.600px;top:805px">Books</div>
<div class="vl" style="left:111px;top:803px;height:17px;background:#b0b0b0"></div>
<div class="t" style="left:117.500px;top:803px;font-weight:bold;font-size:13px;letter-spacing:1.800px">{}</div>
<div class="t g" style="letter-spacing:-0.58px;left:133.400px;top:805px">Func...</div>
<svg class="a" style="left:173px;top:803px" width="16" height="16" viewBox="0 0 16 16"><path d="M3.800 2.500c-2 0-2 1-2 2.500v5c0 1.500 0 2.500 2 2.500M5.700 2.500c2 0 2 1 2 2.500v5c0 1.500 0 2.500-2 2.500" fill="none" stroke="#111" stroke-width="1.500"/><path d="M9.200 11.200h3v-2l3.800 3.300-3.800 3.300v-2h-3z" fill="#2a4ae0"/></svg>
<div class="t g" style="letter-spacing:-0.71px;left:190.600px;top:805px">Temp...</div>
<div class="vl" style="left:227px;top:803px;height:17px;background:#b0b0b0"></div>
<div class="a" style="left:238px;top:92px;width:832px;height:22px;background:#f7f7f7"></div>
<svg class="a" style="left:238px;top:92px" width="100" height="25" viewBox="0 0 100 25"><path d="M3 22L25 1.500h68.500q1.500 0 1.500 1.500v19z" fill="#c4d4f2"/><path d="M93.500 2.500v20" stroke="#fff" stroke-width="1"/><path d="M0 22.500h3.500L25 1.500h68q1.500 0 1.500 1.500v19.500" fill="none" stroke="#9c9c9c"/></svg>
<div class="a" style="left:238px;top:114px;width:832px;height:3px;background:#c4d4f2"></div>
<div class="hl" style="left:333px;top:114px;width:737px;background:#a9a9a9"></div>
<div class="a" style="left:238px;top:117px;width:3px;height:706px;background:#c4d4f2"></div>
<div class="a" style="left:238px;top:820px;width:832px;height:3px;background:#c4d4f2"></div>
<div class="a" style="left:238px;top:823px;width:832px;height:2px;background:#f4f4f4"></div>
<svg class="a" style="left:266px;top:97px" width="12" height="14" viewBox="0 0 12 14"><defs><linearGradient id="gfi" x1="0" y1="0" x2="1" y2="1"><stop offset=".5" stop-color="#fff"/><stop offset="1" stop-color="#c8d4ee"/></linearGradient><pattern id="pd" width="2" height="2" patternUnits="userSpaceOnUse"><rect width="1" height="1" fill="#b4b4b4"/><rect x="1" y="1" width="1" height="1" fill="#b4b4b4"/></pattern></defs>
<path d="M.5 .500h8l3 3v10.500h-11z" fill="url(#gfi)" stroke="#5a6a90" stroke-width=".9"/><path d="M8.500 .500v3h3" fill="#fff" stroke="#5a6a90" stroke-width=".8"/><path d="M2 2.500h3.500l2.500 4.500-2.500 4.500h-3.500z" fill="url(#pd)"/></svg>
<div class="t" style="letter-spacing:-0.62px;left:287.800px;top:96.500px;font-weight:bold">main.c</div>
<div class="a" style="left:240px;top:116px;width:830px;height:704px;background:#fff;border-left:1px solid #9a9a9a;border-top:1px solid #9a9a9a"></div>
<div class="a" style="left:241px;top:117px;width:829px;height:703px;border-left:1px solid #5e5e5e;border-top:1px solid #5e5e5e"></div>
<div class="a" style="left:242px;top:118px;width:62px;height:684px;background:#e8e8e8"></div>
<div class="a" style="left:304px;top:118px;width:14px;height:684px;background:repeating-conic-gradient(#fff 0 25%,#eaeaea 0 50%) 0 0/2px 2px"></div>
<div class="a" style="left:242px;top:802px;width:828px;height:17px;background:#f0f0f0"></div>
<div class="a" style="left:242px;top:819px;width:828px;height:1px;background:#fff"></div>
<div class="a" style="left:259px;top:810px;width:314px;height:2px;background:#8a8a8a"></div>
<div class="a" id="code" style="left:0;top:0;width:1070px;height:802px;overflow:hidden">
<div class="ln" style="top:118px"><i>112</i><b><span class="c">// <span class="j">入口参数：无</span></span></b></div>
<div class="ln" style="top:134px"><i>113</i><b><span class="c">// <span class="j">函数返回：无</span></span></b></div>
<div class="ln" style="top:150px"><i>114</i><b><span class="c">////////////////////////////////////////</span></b></div>
<div class="ln" style="top:166px"><i>115</i><b><span class="k">void</span> TIMER3_ISR(<span class="k">void</span>) <span class="m">interrupt</span> TMR3_VECTOR</b></div>
<div class="ln" style="top:182px"><i>116</i><b>{</b></div>
<div class="ln" style="top:198px"><i>117</i><b>  P03 = !P03;</b></div>
<div class="ln" style="top:214px"><i>118</i><b>}</b></div>
<div class="ln" style="top:230px"><i>119</i><b></b></div>
<div class="ln" style="top:246px"><i>120</i><b><span class="c">////////////////////////////////////////</span></b></div>
<div class="ln" style="top:262px"><i>121</i><b><span class="c">// <span class="j">定时器</span>4<span class="j">中断服务程序</span></span></b></div>
<div class="ln" style="top:278px"><i>122</i><b><span class="c">// <span class="j">入口参数：无</span></span></b></div>
<div class="ln" style="top:294px"><i>123</i><b><span class="c">// <span class="j">函数返回：无</span></span></b></div>
<div class="ln" style="top:310px"><i>124</i><b><span class="c">////////////////////////////////////////</span></b></div>
<div class="ln" style="top:326px"><i>125</i><b><span class="k">void</span> TIMER4_ISR(<span class="k">void</span>) <span class="m">interrupt</span> TMR4_VECTOR</b></div>
<div class="ln" style="top:342px"><i>126</i><b>{</b></div>
<div class="ln" style="top:358px"><i>127</i><b>  P04 = !P04;</b></div>
<div class="ln" style="top:374px"><i>128</i><b>}</b></div>
<div class="ln" style="top:390px"><i>129</i><b></b></div>
<div class="ln" style="top:406px"><i>130</i><b><span class="c">////////////////////////////////////////</span></b></div>
<div class="ln" style="top:422px"><i>131</i><b><span class="c">// <span class="j">定时器</span>11<span class="j">中断服务程序</span></span></b></div>
<div class="ln" style="top:438px"><i>132</i><b><span class="c">// <span class="j">入口参数：无</span></span></b></div>
<div class="ln" style="top:454px"><i>133</i><b><span class="c">// <span class="j">函数返回：无</span></span></b></div>
<div class="ln" style="top:470px"><i>134</i><b><span class="c">////////////////////////////////////////</span></b></div>
<div class="ln" style="top:486px"><i>135</i><b><span class="k">void</span> TIMER11_ISR(<span class="k">void</span>) <span class="m">interrupt</span> TMR11_VECTOR</b></div>
<div class="ln" style="top:502px"><i>136</i><b>{</b></div>
<div class="ln" style="top:518px"><i>137</i><b>  P05 = !P05;</b></div>
<div class="ln" style="top:534px"><i>138</i><b>}</b></div>
<div class="ln" style="top:550px"><i>139</i><b></b></div>
<div class="ln" style="top:566px"><i>140</i><b></b></div>
<div class="ln" style="top:582px"><i>141</i><b><span class="c">////////////////////////////////////////</span></b></div>
<div class="ln" style="top:598px"><i>142</i><b><span class="c">// <span class="j">时钟初始化函数</span></span></b></div>
<div class="ln" style="top:614px"><i>143</i><b><span class="c">// <span class="j">入口参数：无</span></span></b></div>
<div class="ln" style="top:630px"><i>144</i><b><span class="c">// <span class="j">函数返回：无</span></span></b></div>
<div class="ln" style="top:646px"><i>145</i><b><span class="c">////////////////////////////////////////</span></b></div>
<div class="ln" style="top:662px"><i>146</i><b><span class="k">void</span> CLK_Init(<span class="k">void</span>)</b></div>
<div class="ln" style="top:678px"><i>147</i><b>{</b></div>
<div class="ln" style="top:694px"><i>148</i><b>    CLK_SYSCLK_Divider(<span class="n">10</span>);             <span class="c">//<span class="j">切换主时钟前先将系统时钟降频</span></span></b></div>
<div class="ln" style="top:710px"><i>149</i><b></b></div>
<div class="ln" style="top:726px"><i>150</i><b>    HIRC_40M();                         <span class="c">//<span class="j">选择内部预置的频率</span></span></b></div>
<div class="ln" style="top:742px"><i>151</i><b></b></div>
<div class="ln" style="top:758px"><i>152</i><b>    CLK_MCLK_HIRC();                    <span class="c">//<span class="j">选择内部高精度</span>HIRC<span class="j">作为主时钟</span></span></b></div>
<div class="ln" style="top:774px"><i>153</i><b>    CLK_MCLK2_BYPASS();                 <span class="c">//<span class="j">旁路</span>MCLK2,<span class="j">直接使用</span>MCLK<span class="j">选择</span></span></b></div>
<div class="ln" style="top:790px"><i>154</i><b></b></div>
</div>
<svg class="a" style="left:306px;top:185px" width="11" height="11" viewBox="0 0 11 11"><rect x=".5" y=".5" width="10" height="10" fill="#fff" stroke="#808080"/><path d="M2.500 5.500h6" stroke="#404040"/></svg>
<div class="vl" style="left:311px;top:196px;height:42px;background:#808080"></div>
<div class="hl" style="left:311px;top:238px;width:6px;background:#808080"></div>
<svg class="a" style="left:306px;top:345px" width="11" height="11" viewBox="0 0 11 11"><rect x=".5" y=".5" width="10" height="10" fill="#fff" stroke="#808080"/><path d="M2.500 5.500h6" stroke="#404040"/></svg>
<div class="vl" style="left:311px;top:356px;height:42px;background:#808080"></div>
<div class="hl" style="left:311px;top:398px;width:6px;background:#808080"></div>
<svg class="a" style="left:306px;top:505px" width="11" height="11" viewBox="0 0 11 11"><rect x=".5" y=".5" width="10" height="10" fill="#fff" stroke="#808080"/><path d="M2.500 5.500h6" stroke="#404040"/></svg>
<div class="vl" style="left:311px;top:516px;height:58px;background:#808080"></div>
<div class="hl" style="left:311px;top:574px;width:6px;background:#808080"></div>
<svg class="a" style="left:306px;top:681px" width="11" height="11" viewBox="0 0 11 11"><rect x=".5" y=".5" width="10" height="10" fill="#fff" stroke="#808080"/><path d="M2.500 5.500h6" stroke="#404040"/></svg>
<div class="vl" style="left:311px;top:692px;height:110px;background:#808080"></div>
</body></html>
